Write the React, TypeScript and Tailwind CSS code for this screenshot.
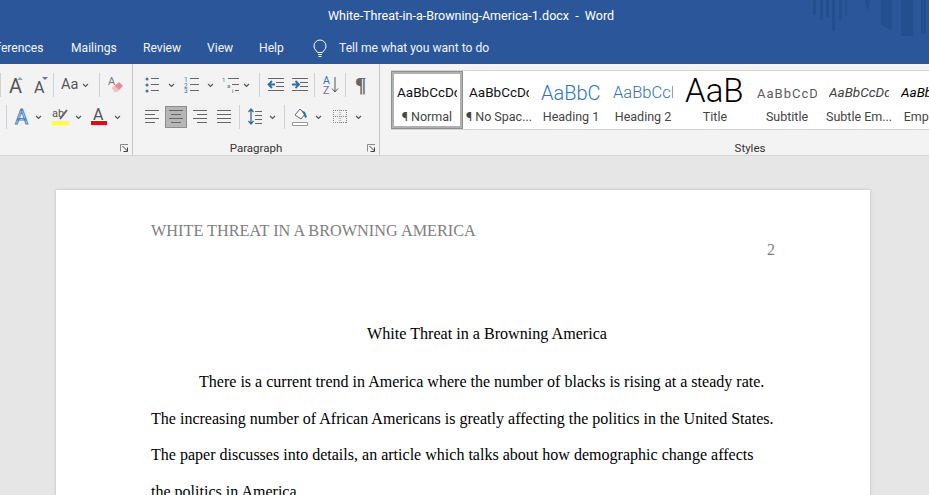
import type { FC, ReactNode } from 'react';

const ui = "font-['Roboto','Noto_Sans',sans-serif]";

// Small helpers for ribbon icons
const Ico: FC<{ w: number; h?: number; cls?: string; children: ReactNode }> = ({ w, h = 20, cls = '', children }) => (
  <svg width={w} height={h} viewBox={`0 0 ${w} ${h}`} className={`shrink-0 overflow-visible ${cls}`} fill="none">
    {children}
  </svg>
);

const Chev: FC<{ cls?: string }> = ({ cls = '' }) => (
  <svg width="7" height="5" viewBox="0 0 7 5" className={`shrink-0 ${cls}`} fill="none">
    <path d="M1 1l2.5 2.5L6 1" stroke="#555" strokeWidth="1.1" />
  </svg>
);

const Sep: FC<{ cls?: string }> = ({ cls = '' }) => <div className={`h-[24px] w-px shrink-0 bg-[#d2d2d2] ${cls}`} />;

const Bars: FC<{ rows: [number, number, number][] }> = ({ rows }) => (
  <>
    {rows.map(([a, b, y], i) => (
      <path key={i} d={`M${a} ${y + 0.5}H${b}`} stroke="#666" />
    ))}
  </>
);

const Launcher = () => (
  <svg width="9" height="8" viewBox="0 0 9 8" className="absolute bottom-[3px] right-[3px]" fill="none">
    <path d="M.5 7.5V.5H8" stroke="#888" />
    <path d="M2.5 2l5 5M7.5 3.5v4H3.5" stroke="#444" />
  </svg>
);

const Bullets = () => (
  <Ico w={14}>
    <circle cx="2" cy="4" r="1.5" fill="#3f75a8" />
    <circle cx="2" cy="10" r="1.5" fill="#3f75a8" />
    <circle cx="2" cy="16" r="1.5" fill="#3f75a8" />
    <Bars rows={[[6, 14, 3], [6, 14, 9], [6, 14, 15]]} />
  </Ico>
);

const Numbers = () => (
  <Ico w={15}>
    <text x="0" y="7" fontSize="6.5" fill="#3f75a8">1</text>
    <text x="0" y="12.5" fontSize="6.5" fill="#3f75a8">2</text>
    <text x="0" y="18" fontSize="6.5" fill="#3f75a8">3</text>
    <Bars rows={[[6, 15, 3], [6, 15, 9], [6, 15, 15]]} />
  </Ico>
);

const Multi = () => (
  <Ico w={17}>
    <text x="0" y="7" fontSize="6" fill="#3f75a8">1</text>
    <text x="5" y="12.5" fontSize="6" fill="#3f75a8">a</text>
    <text x="10" y="18" fontSize="6" fill="#555">i</text>
    <Bars rows={[[6, 17, 3], [10, 17, 9], [13, 17, 15]]} />
  </Ico>
);

const Outdent = () => (
  <Ico w={17}>
    <Bars rows={[[1, 17, 3], [9, 17, 7], [9, 17, 11], [1, 17, 15]]} />
    <path d="M8 9.5H2M5 6L1.5 9.5 5 13" stroke="#2e6da4" strokeWidth="1.8" />
  </Ico>
);

const Indent = () => (
  <Ico w={17}>
    <Bars rows={[[1, 17, 3], [9, 17, 7], [9, 17, 11], [1, 17, 15]]} />
    <path d="M1 9.5h6M4.5 6L8 9.5 4.5 13" stroke="#2e6da4" strokeWidth="1.8" />
  </Ico>
);

const Sort = () => (
  <Ico w={16}>
    <text x="0" y="9" fontSize="10.5" fill="#2e75b6">A</text>
    <text x="0" y="19" fontSize="10.5" fill="#8a5fa8">Z</text>
    <path d="M12 2v15M9 13.5l3 3.5 3-3.5" stroke="#555" />
  </Ico>
);

const Align: FC<{ rows: [number, number, number][] }> = ({ rows }) => (
  <Ico w={14}>
    <Bars rows={rows} />
  </Ico>
);

const Spacing = () => (
  <Ico w={14}>
    <path d="M3 2v15M.5 5L3 2l2.5 3M.5 14L3 17l2.5-3" stroke="#2e6da4" strokeWidth="1.3" />
    <Bars rows={[[7, 14, 4], [7, 14, 8], [7, 14, 12], [7, 14, 16]]} />
  </Ico>
);

const Shading = () => (
  <Ico w={16}>
    <path d="M3 8l5-6 5 5-4 5z" stroke="#666" fill="#fff" />
    <path d="M9 3l4 2 2 5-2 1-1-3z" fill="#2e6da4" />
    <path d="M.5 15.5h15v3H.5z" stroke="#999" fill="#fff" />
  </Ico>
);

const Borders = () => (
  <Ico w={16}>
    <path d="M1 3.5h14M1 9.5h14M1 15.5h14M1.5 3v13M8 3v13M14.5 3v13" stroke="#888" strokeDasharray="1 1" />
  </Ico>
);

const Eraser = () => (
  <Ico w={16}>
    <text x="0" y="10" fontSize="11" fill="#777">A</text>
    <path d="M4 13l7-6 4 4-6 6H7z" fill="#e98a96" />
    <path d="M4 13l3 4h2l2-2-4-4z" fill="#f4c2c8" />
  </Ico>
);

const Grow: FC<{ size: number; down?: boolean }> = ({ size, down }) => (
  <Ico w={14}>
    <text x="0" y="18" fontSize={size} fill="#555">A</text>
    <path d={down ? 'M8 2h6l-3 3z' : 'M8 5l3-3 3 3z'} fill={down ? '#5b7ea3' : '#8aa6c0'} />
  </Ico>
);

const TextEffect = () => (
  <Ico w={15}>
    <text x="0" y="17" fontSize="20" fill="#eaf2fa" stroke="#4a86c5" strokeWidth="1">A</text>
  </Ico>
);

const Highlight = () => (
  <Ico w={17}>
    <text x="0" y="10" fontSize="11" fill="#555">ab</text>
    <path d="M8 12l7-9" stroke="#666" strokeWidth="2" />
    <rect x="0" y="14" width="17" height="4" fill="#ffff3c" />
  </Ico>
);

const FontColor = () => (
  <Ico w={16}>
    <text x="2" y="13" fontSize="16" fill="#555">A</text>
    <rect x="0" y="14" width="16" height="4" fill="#e00b16" />
  </Ico>
);

const Bulb = () => (
  <Ico w={14} h={18}>
    <path d="M4.5 12.5C3.5 10.5 1 9.5 1 6a6 6 0 0 1 12 0c0 3.5-2.5 4.5-3.5 6.5z" stroke="#fff" />
    <path d="M5 14.5h4M5.5 16.5h3" stroke="#fff" />
  </Ico>
);

const styleItems = [
  { label: '¶ Normal', text: 'AaBbCcDdEe', cls: 'pt-[6px] text-[13.5px] text-[#111]', box: true },
  { label: '¶ No Spac...', text: 'AaBbCcDdEe', cls: 'pt-[6px] text-[13.5px] text-[#111]' },
  { label: 'Heading 1', text: 'AaBbCcDd', cls: 'pt-[6px] text-[20px] font-light text-[#2e74b5]' },
  { label: 'Heading 2', text: 'AaBbCcDdE', cls: 'pt-[6px] text-[16.5px] font-light text-[#2e74b5]' },
  { label: 'Title', text: 'AaB', cls: 'text-[33px] font-light text-black' },
  { label: 'Subtitle', text: 'AaBbCcDdE', cls: 'pt-[6px] text-[13px] tracking-[1px] text-[#5a5a5a]' },
  { label: 'Subtle Em...', text: 'AaBbCcDdEe', cls: 'pt-[6px] text-[13.5px] italic text-[#404040]' },
  { label: 'Emphasis', text: 'AaBbCcDdEe', cls: 'pt-[6px] text-[13.5px] italic text-black' },
];

export default function App() {
  return (
    <div className={`relative flex h-[495px] w-[929px] flex-col overflow-hidden bg-[#e6e6e6] ${ui}`}>
      {/* title bar + tabs */}
      <header className="relative h-[64px] shrink-0 overflow-hidden bg-[#2b579a] text-white">
        <div className="flex h-[32px] items-center justify-center pl-[13px] pt-[1px] text-[12.5px]">
          <span className="whitespace-pre">White-Threat-in-a-Browning-America-1.docx  -  Word</span>
        </div>
        <nav className="flex h-[32px] items-center pt-[1px] text-[12.1px] text-[#f2f5fa]">
          <span className="-ml-[17px] w-[88px] shrink-0">References</span>
          <span className="w-[72px] shrink-0">Mailings</span>
          <span className="w-[64px] shrink-0">Review</span>
          <span className="w-[52px] shrink-0">View</span>
          <span className="w-[54px] shrink-0">Help</span>
          <Bulb />
          <span className="ml-[12px]">Tell me what you want to do</span>
        </nav>
        {/* faint background art in the title bar */}
        <svg width="113" height="40" viewBox="0 0 113 40" className="absolute right-[3px] top-0" fill="#1f4a87" opacity="0.6">
          <path d="M0 0h3v15H0zM7 0h3v20H7zM13 0h3v17h-3zM19 0h3v31h-3zM26 0h3v20h-3zM32 0h2v15h-2zM52 0h5l-2 12zM68 0h11v30l-11-5zM88 0h12v36H88zM108 0h5v34h-5z" />
        </svg>
      </header>

      {/* ribbon */}
      <section className="flex h-[92px] shrink-0 border-b border-[#d6d6d6] bg-[#f3f3f3] text-[#444]">
        {/* font group, mostly scrolled off to the left */}
        <div className="relative w-[133px] shrink-0 border-r border-[#c6c6c6] pt-[9px]">
          <div className="flex h-[24px] items-center">
            <Sep />
            <div className="ml-[8px]"><Grow size={20} /></div>
            <div className="ml-[11px]"><Grow size={16} down /></div>
            <Sep cls="ml-[5px]" />
            <span className="ml-[7px] whitespace-nowrap text-[14.5px] leading-none text-[#555]">Aa</span>
            <Chev cls="ml-[4px]" />
            <Sep cls="ml-[10px]" />
            <div className="ml-[8px]"><Eraser /></div>
          </div>
          <div className="mt-[8px] flex h-[24px] items-center">
            <Sep cls="ml-[6px]" />
            <div className="ml-[8px]"><TextEffect /></div>
            <Chev cls="ml-[5px]" />
            <div className="ml-[10px]"><Highlight /></div>
            <Chev cls="ml-[6px]" />
            <div className="ml-[9px]"><FontColor /></div>
            <Chev cls="ml-[7px]" />
          </div>
          <Launcher />
        </div>

        {/* paragraph group */}
        <div className="relative w-[247px] shrink-0 border-r border-[#c6c6c6] pt-[9px]">
          <div className="flex h-[24px] items-center pl-[12px]">
            <Bullets />
            <Chev cls="ml-[9px]" />
            <div className="ml-[9px]"><Numbers /></div>
            <Chev cls="ml-[8px]" />
            <div className="ml-[8px]"><Multi /></div>
            <Chev cls="ml-[4px]" />
            <Sep cls="ml-[9px]" />
            <div className="ml-[7px]"><Outdent /></div>
            <div className="ml-[7px]"><Indent /></div>
            <Sep cls="ml-[6px]" />
            <div className="ml-[8px]"><Sort /></div>
            <Sep cls="ml-[6px]" />
            <span className="ml-[9px] font-['Liberation_Serif',serif] text-[21px] font-bold leading-none text-[#666]">¶</span>
          </div>
          <div className="mt-[8px] flex h-[24px] items-center pl-[12px]">
            <Align rows={[[0, 14, 3], [0, 10, 7], [0, 14, 11], [0, 10, 15]]} />
            <div className="ml-[6px] flex h-[22px] w-[22px] items-center justify-center border border-[#8e8e8e] bg-[#b6b6b6]">
              <Align rows={[[0, 14, 3], [2, 12, 7], [0, 14, 11], [2, 12, 15]]} />
            </div>
            <div className="ml-[6px]"><Align rows={[[0, 14, 3], [4, 14, 7], [0, 14, 11], [4, 14, 15]]} /></div>
            <div className="ml-[10px]"><Align rows={[[0, 14, 3], [0, 14, 7], [0, 14, 11], [0, 14, 15]]} /></div>
            <Sep cls="ml-[8px]" />
            <div className="ml-[8px]"><Spacing /></div>
            <Chev cls="ml-[7px]" />
            <Sep cls="ml-[8px]" />
            <div className="ml-[7px]"><Shading /></div>
            <Chev cls="ml-[7px]" />
            <div className="ml-[10px]"><Borders /></div>
            <Chev cls="ml-[7px]" />
          </div>
          <div className="absolute bottom-0 left-0 right-0 h-[14px] text-center text-[11.5px] leading-[14px] text-[#333]">Paragraph</div>
          <Launcher />
        </div>

        {/* styles group */}
        <div className="relative w-[740px] shrink-0 pt-[6px]">
          <div className="ml-[11px] flex h-[60px] border-y border-[#d4d4d4] bg-white">
            {styleItems.map((s) => (
              <div
                key={s.label}
                className={`flex h-[58px] w-[72px] shrink-0 flex-col overflow-hidden ${s.box ? 'border-[3px] border-[#b0b0b0] outline outline-1 -outline-offset-1 outline-[#8f8f8f]' : 'border-[3px] border-transparent'}`}
              >
                <div className={`flex h-[32px] items-center whitespace-nowrap px-[3px] leading-none ${s.cls}`}>
                  <span className="block w-[60px] overflow-hidden">{s.text}</span>
                </div>
                <div className="mt-[3px] whitespace-nowrap text-center text-[12.5px] leading-[16px] text-[#444]">{s.label}</div>
              </div>
            ))}
          </div>
          <div className="absolute bottom-0 left-0 right-0 h-[14px] text-center text-[11.5px] leading-[14px] text-[#333]">Styles</div>
        </div>
      </section>

      {/* document */}
      <main className="flex-1 overflow-hidden pl-[56px] pt-[34px]">
        <article className="h-[400px] w-[814px] bg-white pl-[95px] pr-[95px] pt-[31px] font-['Liberation_Serif',serif] text-[16.05px] text-black shadow-[0_0_3px_rgba(0,0,0,0.2)]">
          <div className="h-[20px] text-[16.25px] leading-[20px] text-[#7f7f7f]">WHITE THREAT IN A BROWNING AMERICA</div>
          <div className="-mt-px h-[20px] text-right leading-[20px] text-[#7f7f7f]">2</div>
          <div className="mt-[64px] h-[20px] pl-[48px] text-center text-[16.13px] leading-[20px]">White Threat in a Browning America</div>
          <p className="mt-[20px] indent-[48px] leading-[36.5px]">
            There is a current trend in America where the number of blacks is rising at a steady rate. The increasing
            number of African Americans is greatly affecting the politics in the United States. The paper discusses
            into details, an article which talks about how demographic change affects the politics in America.
          </p>
        </article>
      </main>
    </div>
  );
}
